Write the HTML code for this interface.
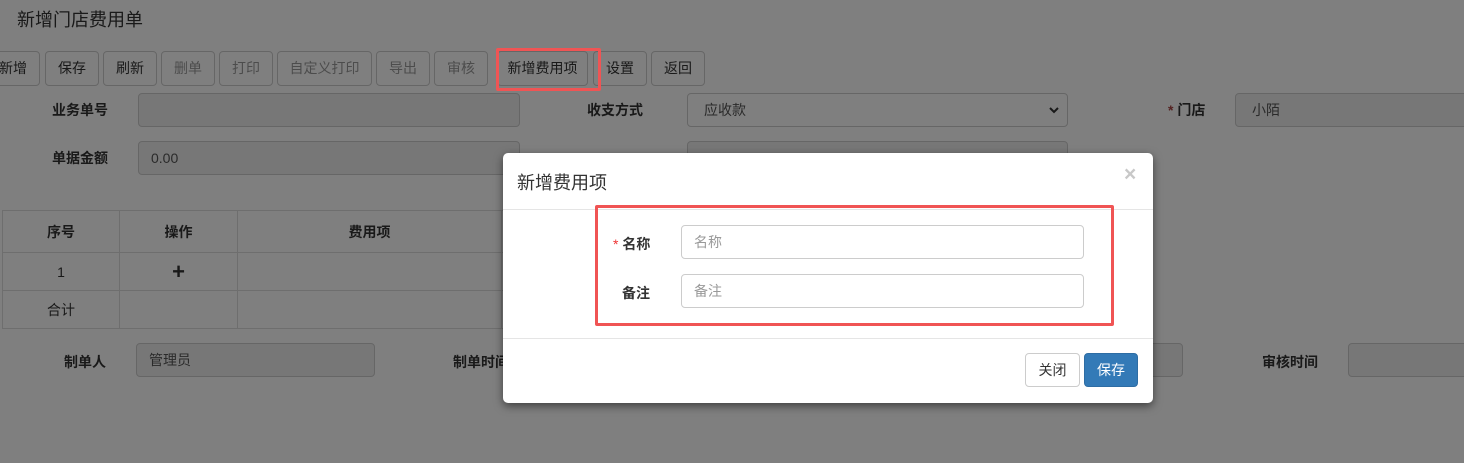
<!DOCTYPE html>
<html><head><meta charset="utf-8"><style>
*{box-sizing:border-box;margin:0;padding:0}
body{width:1464px;height:463px;overflow:hidden;background:#fff;font-family:"Liberation Sans","Noto Sans CJK SC",sans-serif;font-size:14px;color:#333;position:relative}
.a{position:absolute}
.btn{position:absolute;top:51px;height:35px;border:1px solid #ccc;border-radius:4px;background:#fff;text-align:center;line-height:33px;font-size:14px;color:#333}
.dis{color:#999}
.lbl{position:absolute;font-weight:bold;font-size:14px;color:#333}
.inp{position:absolute;height:34px;border:1px solid #ccc;border-radius:4px;background:#eee;padding-left:12px;line-height:32px;color:#555}
.ov{position:absolute;left:0;top:0;width:1464px;height:463px;background:rgba(0,0,0,.5)}
td{border:1px solid #ddd;text-align:center}
</style></head><body>
<div class="a" style="left:17px;top:6px;font-size:18px;color:#333">新增门店费用单</div>
<div class="btn" style="left:-14px;width:54px">新增</div>
<div class="btn" style="left:45px;width:54px">保存</div>
<div class="btn" style="left:103px;width:54px">刷新</div>
<div class="btn dis" style="left:161px;width:54px">删单</div>
<div class="btn dis" style="left:219px;width:54px">打印</div>
<div class="btn dis" style="left:277px;width:95px">自定义打印</div>
<div class="btn dis" style="left:376px;width:54px">导出</div>
<div class="btn dis" style="left:434px;width:54px">审核</div>
<div class="btn" style="left:497px;width:91px">新增费用项</div>
<div class="btn" style="left:593px;width:54px">设置</div>
<div class="btn" style="left:651px;width:54px">返回</div>

<div class="lbl" style="left:52px;top:100px">业务单号</div>
<div class="inp" style="left:138px;top:93px;width:382px"></div>
<div class="lbl" style="left:587px;top:100px">收支方式</div>
<div class="inp" style="left:687px;top:93px;width:381px;background:#fff;padding-left:16px">应收款<svg style="position:absolute;right:8px;top:12px" width="10" height="8" viewBox="0 0 10 8"><path d="M1 2 L5 6 L9 2" stroke="#333" stroke-width="2" fill="none"/></svg></div>
<div class="lbl" style="left:1168px;top:100px"><span style="color:#a94442">*</span> 门店</div>
<div class="inp" style="left:1235px;top:93px;width:240px;padding-left:16px">小陌</div>

<div class="lbl" style="left:52px;top:148px">单据金额</div>
<div class="inp" style="left:138px;top:141px;width:382px">0.00</div>
<div class="inp" style="left:687px;top:141px;width:381px"></div>

<table class="a" style="left:2px;top:210px;width:1100px;border-collapse:collapse;font-size:14px">
<tr style="height:42px;font-weight:bold"><td style="width:117px">序号</td><td style="width:118px">操作</td><td style="width:264px">费用项</td><td></td></tr>
<tr style="height:38px"><td>1</td><td style="font-size:22px;font-weight:bold">+</td><td></td><td></td></tr>
<tr style="height:38px"><td>合计</td><td></td><td></td><td></td></tr>
</table>

<div class="lbl" style="left:64px;top:352px">制单人</div>
<div class="inp" style="left:136px;top:343px;width:239px">管理员</div>
<div class="lbl" style="left:453px;top:352px">制单时间</div>
<div class="inp" style="left:1000px;top:343px;width:183px"></div>
<div class="lbl" style="left:1262px;top:352px">审核时间</div>
<div class="inp" style="left:1348px;top:343px;width:130px"></div>

<div class="ov"></div>
<div class="a" style="left:496px;top:48px;width:105px;height:43px;border:3px solid #f05454;border-radius:2px"></div>

<div class="a" style="left:503px;top:153px;width:650px;height:250px;background:#fff;border-radius:5px;box-shadow:0 3px 9px rgba(0,0,0,.5)">
  <div class="a" style="left:14px;top:16px;font-size:18px;color:#333">新增费用项</div>
  <div class="a" style="left:621px;top:10px;font-size:21px;font-weight:bold;color:#c8c8c8">×</div>
  <div class="a" style="left:0;top:56px;width:650px;border-top:1px solid #e5e5e5"></div>
  <div class="a" style="left:0;top:185px;width:650px;border-top:1px solid #e5e5e5"></div>
  <div class="lbl" style="left:110px;top:81px"><span style="color:#e33;font-weight:normal">*</span> 名称</div>
  <div class="inp" style="left:178px;top:72px;width:403px;background:#fff;color:#999">名称</div>
  <div class="lbl" style="left:119px;top:130px">备注</div>
  <div class="inp" style="left:178px;top:121px;width:403px;background:#fff;color:#999">备注</div>
  <div class="a" style="left:92px;top:52px;width:519px;height:121px;border:3px solid #f05454;border-radius:2px"></div>
  <div class="a" style="left:522px;top:200px;width:55px;height:34px;border:1px solid #ccc;border-radius:4px;text-align:center;line-height:32px;color:#333">关闭</div>
  <div class="a" style="left:581px;top:200px;width:54px;height:34px;border:1px solid #2e6da4;border-radius:4px;background:#337ab7;text-align:center;line-height:32px;color:#fff">保存</div>
</div>
</body></html>
